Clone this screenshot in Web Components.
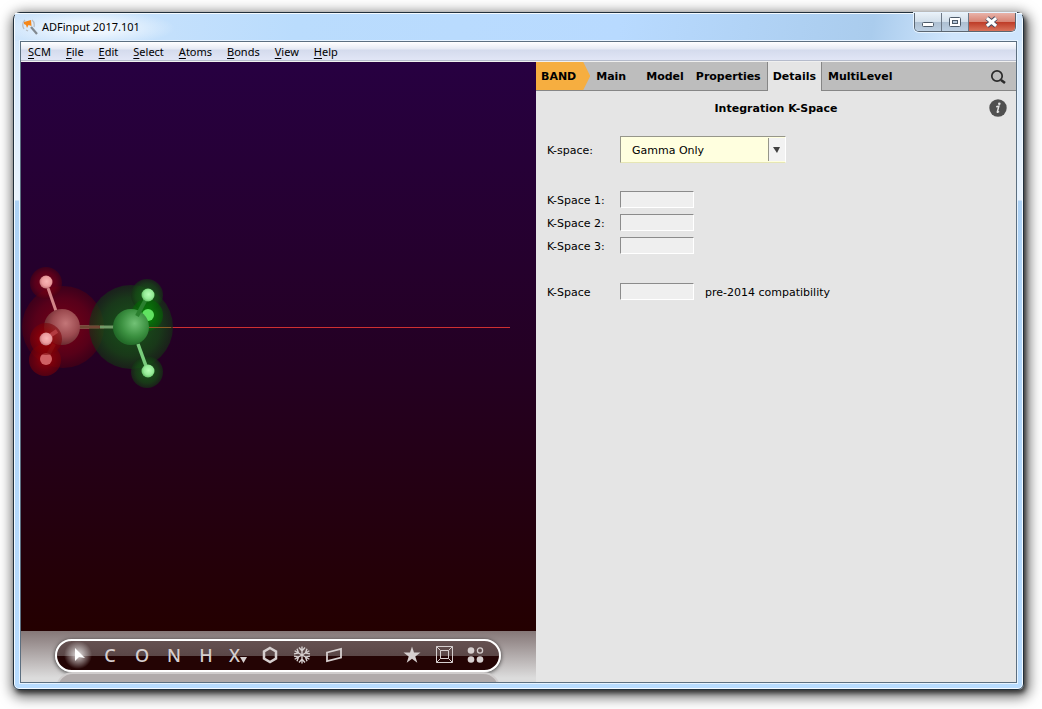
<!DOCTYPE html>
<html lang="en">
<head>
<meta charset="utf-8">
<meta name="viewport" content="width=device-width, initial-scale=1">
<title>ADFinput 2017.101</title>
<style>
  * { box-sizing: border-box; }
  body {
    margin: 0;
    min-height: 100vh;
    padding: 12px 18px 19px 13px;
    display: flex;
    background: #fff;
    color: #000;
    font: 11px "DejaVu Sans", Verdana, sans-serif;
  }
  app-window { flex: 1; min-width: 0; }
</style>
</head>
<body>
<app-window heading="ADFinput 2017.101">
  <menu-bar slot="menu" items="SCM,File,Edit,Select,Atoms,Bonds,View,Help"></menu-bar>
  <molecule-view></molecule-view>
  <settings-panel heading="Integration K-Space">
    <tab-strip slot="tabs" engine="BAND" items="Main,Model,Properties,Details,MultiLevel" active="Details"></tab-strip>
    <choice-row label="K-space:" value="Gamma Only"></choice-row>
    <field-row label="K-Space 1:"></field-row>
    <field-row label="K-Space 2:"></field-row>
    <field-row label="K-Space 3:"></field-row>
    <field-row class="legacy" label="K-Space" note="pre-2014 compatibility"></field-row>
  </settings-panel>
</app-window>

<script>
const base = `
  *, *::before, *::after { box-sizing: border-box; }
  button { font: inherit; color: inherit; background: none; border: 0; margin: 0; padding: 0; }
  svg { display: block; }
`;

class AppWindow extends HTMLElement {
  connectedCallback() {
    this.attachShadow({ mode: 'open' });
    this.shadowRoot.innerHTML = `
      <style>
        ${base}
        :host {
          display: flex;
          flex-direction: column;
          padding: 0 6px 6px;
          border: 1px solid #22303c;
          border-radius: 7px 7px 6px 6px;
          background:
            linear-gradient(#cfe5fb 0, #e9f3fd 187px, #aed2f5 188px, #b8dcff 100%);
          box-shadow: inset 0 0 0 1px #f4faff, 2px 3px 4px rgba(0, 0, 0, .55), 2px 4px 13px 3px rgba(0, 0, 0, .6);
        }

        header {
          display: flex;
          height: 28px;
          margin: 0 -5px;
          padding: 0 6px 0 7px;
          border-top: 1px solid #f4faff;
          background:
            radial-gradient(ellipse 85px 18px at 75px 14px, #eef6fe 30%, rgba(238, 246, 254, 0) 100%),
            linear-gradient(100deg, #cfe5fb 0, #badcfd 28%, #b8daff 60%, #aacced 85%, #cfe5fc 93%, #cfe5fc 100%);
        }

        .logo { margin: 4px 4px 0 0; flex: none; }

        h1 {
          flex: 1;
          margin: 0;
          font: 11px/26px "Noto Sans", "Open Sans", sans-serif;
        }

        .controls {
          display: flex;
          height: 19px;
          margin-top: -1px;
          border: 1px solid #5a6672;
          border-top: 0;
          border-radius: 0 0 5px 5px;
          overflow: hidden;
          box-shadow: 0 0 0 1px #e6f3ff;
        }

        .controls button {
          width: 27px;
          display: grid;
          place-items: center;
          border-right: 1px solid #6c7886;
          background: linear-gradient(#e9f1f8, #d2dfeb 48%, #adbfd1 50%, #bccfe2);
        }

        .controls button:last-child {
          width: 46px;
          border: 0;
          background: linear-gradient(#e8b3a9, #d88475 48%, #bd3a26 50%, #d9735b);
        }

        main {
          flex: 1;
          display: flex;
          flex-direction: column;
          border: 1px solid #5c6f80;
          box-shadow: 0 0 0 1px #e6f3ff;
        }

        .panes { flex: 1; display: flex; }
      </style>

      <header>
        <svg class="logo" width="16" height="18" viewBox="0 0 16 18" fill="none">
          <path d="M3 2Q-1 6 2 11M4 12l2 1M10 2q3 2 2 7" stroke="#b7bcc3" stroke-width="1.3"/>
          <path d="M2 4 9 2l.5 6-3-1L5 10 4 7 2 6z" fill="#f5871a"/>
          <path d="m9 9 6 7" stroke="#828990" stroke-width="2.2"/>
        </svg>
        <h1>${this.getAttribute('heading')}</h1>
        <div class="controls">
          <button aria-label="Minimize">
            <svg width="14" height="16"><rect x="1.5" y="8.5" width="11" height="4" rx="1" fill="#fff" stroke="#4d5a68"/></svg>
          </button>
          <button aria-label="Maximize">
            <svg width="14" height="16"><rect x="1.500" y="3.5" width="11" height="9" rx="1" fill="#fff" stroke="#4d5a68"/><rect x="4.5" y="6.5" width="5" height="3" fill="#b8c9da" stroke="#4d5a68"/></svg>
          </button>
          <button aria-label="Close">
            <svg width="14" height="16" fill="none"><path d="m2 4 9 8m0-8-9 8" stroke="#454d63" stroke-width="5"/><path d="m3 5 7 6m0-6-7 6" stroke="#fff" stroke-width="3" stroke-linecap="square"/></svg>
          </button>
        </div>
      </header>
      <main>
        <slot name="menu"></slot>
        <div class="panes"><slot></slot></div>
      </main>
    `;
  }
}

class MenuBar extends HTMLElement {
  connectedCallback() {
    const items = this.getAttribute('items').split(',');
    this.attachShadow({ mode: 'open' });
    this.shadowRoot.innerHTML = `
      <style>
        ${base}
        :host {
          display: block;
          height: 20px;
          border-bottom: 1px solid #f0f0f0;
          background: linear-gradient(#fff, #e6eaf4 7px, #d4dbed 8px, #e1e6f6 18px, #b6bccc 18px);
          font: 11px/19px "Noto Sans", "Open Sans", sans-serif;
        }
        nav { display: flex; }
        button { padding: 0 8px 0 7px; white-space: nowrap; }
        u { text-underline-offset: 2px; }
      </style>
      <nav>${items.map(t => `<button><u>${t[0]}</u>${t.slice(1)}</button>`).join('')}</nav>
    `;
  }
}

class MoleculeView extends HTMLElement {
  connectedCallback() {
    this.attachShadow({ mode: 'open' });
    this.shadowRoot.innerHTML = `
      <style>
        ${base}
        :host {
          flex: 515 1 0;
          min-width: 0;
          display: flex;
          flex-direction: column;
          background: linear-gradient(#270041, #240022 50%, #240000 92%);
        }
        .scene { flex: 1; display: flex; align-items: center; overflow: hidden; }
        .scene svg { flex: none; margin-bottom: 40px; }
      </style>
      <div class="scene">
        <svg width="515" height="150" viewBox="21 252 515 150" role="img" aria-label="Ethane fragments">
          <defs>
            <radialGradient id="rc" cx=".6" cy=".4" r=".6"><stop offset="0" stop-color="#c37678"/><stop offset=".6" stop-color="#9c4b50"/><stop offset="1" stop-color="#6b2b30"/></radialGradient>
            <radialGradient id="gc" cx=".6" cy=".4" r=".6"><stop offset="0" stop-color="#72c276"/><stop offset=".6" stop-color="#3c9141"/><stop offset="1" stop-color="#236c29"/></radialGradient>
            <radialGradient id="rh" cx=".55" cy=".45" r=".6"><stop offset="0" stop-color="#fab6b6"/><stop offset=".6" stop-color="#ec9c9f"/><stop offset="1" stop-color="#b8676b"/></radialGradient>
            <radialGradient id="gh" cx=".55" cy=".45" r=".6"><stop offset="0" stop-color="#b5ffb5"/><stop offset=".6" stop-color="#94ea96"/><stop offset="1" stop-color="#5cb85e"/></radialGradient>
            <radialGradient id="rs"><stop offset="0" stop-color="#990010" stop-opacity=".75"/><stop offset=".7" stop-color="#720012" stop-opacity=".65"/><stop offset="1" stop-color="#4c0012" stop-opacity=".6"/></radialGradient>
            <radialGradient id="gs"><stop offset="0" stop-color="#146c16" stop-opacity=".8"/><stop offset=".7" stop-color="#145014" stop-opacity=".7"/><stop offset="1" stop-color="#153015" stop-opacity=".65"/></radialGradient>
            <radialGradient id="rb"><stop offset="0" stop-color="#b80000" stop-opacity=".75"/><stop offset="1" stop-color="#780006" stop-opacity=".55"/></radialGradient>
            <radialGradient id="gb"><stop offset="0" stop-color="#00a800" stop-opacity=".75"/><stop offset="1" stop-color="#006800" stop-opacity=".5"/></radialGradient>
          </defs>
          <path d="M148 327.5H510" stroke="#ce3031"/>
          <circle cx="63" cy="327" r="41" fill="url(#rs)"/>
          <circle cx="46" cy="283" r="16" fill="url(#rs)"/>
          <path d="m48 288 8 23" stroke="#d28589" stroke-width="3"/>
          <circle cx="46" cy="282" r="6.5" fill="url(#rh)"/>
          <path d="M78 327h21" stroke="#8c5353" stroke-width="4"/>
          <circle cx="62" cy="327" r="18" fill="url(#rc)"/>
          <circle cx="131" cy="327" r="42" fill="url(#gs)"/>
          <path d="M80 327h24" stroke="#704633" stroke-width="3"/>
          <path d="M100 327h17" stroke="#709b67" stroke-width="3"/>
          <circle cx="147" cy="295" r="16" fill="url(#gs)"/>
          <circle cx="147" cy="315" r="16" fill="url(#gb)"/>
          <circle cx="148" cy="315" r="6" fill="#60e361"/>
          <circle cx="131" cy="327" r="18" fill="url(#gc)"/>
          <path d="m146 299-9 17" stroke="#2a7f2e" stroke-width="4"/>
          <circle cx="148" cy="295" r="6.5" fill="url(#gh)"/>
          <path d="M149 327.5h22" stroke="#8c5c25"/>
          <circle cx="147" cy="372" r="16" fill="url(#gs)"/>
          <path d="m138 344 8 22" stroke="#78cb7b" stroke-width="3.5"/>
          <circle cx="148" cy="371" r="6.5" fill="url(#gh)"/>
          <circle cx="45" cy="360" r="16" fill="url(#rb)"/>
          <path d="m54 344-7 13" stroke="#851b20" stroke-width="4"/>
          <circle cx="46" cy="359" r="6" fill="#cf6064"/>
          <circle cx="46" cy="339" r="16" fill="url(#rb)"/>
          <path d="m57 331-9 6" stroke="#b33b40" stroke-width="4"/>
          <circle cx="46" cy="339" r="6.5" fill="url(#rh)"/>
        </svg>
      </div>
      <tool-dock></tool-dock>
    `;
  }
}

class ToolDock extends HTMLElement {
  connectedCallback() {
    const color = '#d6cfcf';
    const icon = body => `<svg width="20" height="20" viewBox="0 0 20 20" fill="none" stroke="${color}">${body}</svg>`;
    const arm = [0, 60, 120, 180, 240, 300]
      .map(a => `<path transform="rotate(${a} 10 10)" d="M10 10V1.500M7 2.500l3 3.500 3-3.500"/>`).join('');

    this.attachShadow({ mode: 'open' });
    this.shadowRoot.innerHTML = `
      <style>
        ${base}
        :host {
          display: block;
          height: 51px;
          padding: 8px 35px 0 34px;
          overflow: hidden;
          background: linear-gradient(#857777, #dcdcdc 92%);
        }
        .bar {
          display: flex;
          align-items: center;
          height: 33px;
          padding: 0 7px 2px 5px;
          border: 2px solid #fff;
          border-radius: 17px;
          background: linear-gradient(#655151, #5b4747 50%, #240404 51%, #240404);
          box-shadow: 0 1px 4px rgba(0, 0, 0, .7);
          color: ${color};
          font: 500 18px "Noto Sans", "Open Sans", sans-serif;
        }
        .reflection {
          height: 33px;
          margin: 0 1px;
          border: 2px solid #d0cdcd;
          border-radius: 17px;
          background: #b1abab;
        }
        button {
          flex: 0 1 32px;
          min-width: 0;
          height: 28px;
          display: flex;
          align-items: center;
          justify-content: center;
        }
        .pointer { background: radial-gradient(circle 14px, rgba(255, 255, 255, .85), rgba(255, 255, 255, 0)); }
        .gap { flex: 1; }
      </style>
      <div class="bar">
        <button class="pointer" aria-label="Pointer">${icon('<path d="M7 3v13l4-4 6 1z" fill="#fff" stroke="none"/>')}</button>
        <button>C</button>
        <button>O</button>
        <button>N</button>
        <button>H</button>
        <button>X<svg width="7" height="20" aria-hidden="true"><path d="M0 12h7l-3.500 6z" fill="${color}"/></svg></button>
        <button aria-label="Ring">${icon('<path d="m10 3 6 3.500v7L10 17l-6-3.500v-7z" stroke-width="2.5"/>')}</button>
        <button aria-label="Crystal">${icon(`<g stroke-width="1.400">${arm}</g>`)}</button>
        <button aria-label="Slab">${icon('<path d="M3 7.500 17 4v8.500L3 16z" stroke-width="1.800"/>')}</button>
        <span class="gap"></span>
        <button aria-label="Favorites">${icon(`<path d="m10 1.500 2 6h6.500l-5.200 4 2 6.200-5.300-3.900-5.300 3.900 2-6.200-5.200-4H8z" fill="${color}" stroke="none"/>`)}</button>
        <button aria-label="Box">${icon('<path d="M2.5 1.5h16v16h-16zM6.5 5.5h8v8h-8zM2.5 1.5l4 4m12-4-4 4m4 12-4-4m-12 4 4-4"/>')}</button>
        <button aria-label="View style">${icon(`<g fill="${color}" stroke="none"><circle cx="5" cy="5.500" r="3.300"/><circle cx="5" cy="14.500" r="3.300"/><circle cx="14" cy="14.500" r="3.300"/></g><circle cx="14" cy="5.500" r="2.600" stroke-width="1.300"/>`)}</button>
      </div>
      <div class="reflection"></div>
    `;
  }
}

class SettingsPanel extends HTMLElement {
  connectedCallback() {
    this.attachShadow({ mode: 'open' });
    this.shadowRoot.innerHTML = `
      <style>
        ${base}
        :host { flex: 480 1 0; min-width: 0; background: #e5e5e5; }
        header {
          display: grid;
          grid-template-columns: 32px 1fr 32px;
          align-items: center;
          height: 34px;
        }
        h2 { grid-column: 2; margin: 0; text-align: center; font-size: 11px; }
        button { margin-left: 5px; }
        form { padding: 11px; }
        ::slotted(choice-row) { margin-bottom: 25px; }
        ::slotted(.legacy) { margin-top: 23px; }
      </style>
      <slot name="tabs"></slot>
      <header>
        <h2>${this.getAttribute('heading')}</h2>
        <button aria-label="Info">
          <svg width="18" height="18" viewBox="0 0 18 18" aria-hidden="true">
            <circle cx="9" cy="9" r="8.700" fill="#505050"/>
            <circle cx="10.300" cy="4.700" r="1.300" fill="#e5e5e5"/>
            <path d="M7.200 7.800 9.800 7.300 8.300 13q0 .8 1.800-.5" fill="none" stroke="#e5e5e5" stroke-width="1.500"/>
          </svg>
        </button>
      </header>
      <form><slot></slot></form>
    `;
  }
}

class TabStrip extends HTMLElement {
  connectedCallback() {
    const active = this.getAttribute('active');
    const tabs = this.getAttribute('items').split(',').map(t =>
      `<button role="tab" aria-selected="${t === active}">${t}</button>`).join('');

    this.attachShadow({ mode: 'open' });
    this.shadowRoot.innerHTML = `
      <style>
        ${base}
        :host { display: block; font-weight: bold; }
        div {
          display: flex;
          height: 29px;
          background: linear-gradient(#bdbdbd 28px, #868686 28px);
        }
        button { padding: 0 6px; }
        .engine {
          height: 28px;
          padding: 0 14px 0 5px;
          background: #f6ae40;
          clip-path: polygon(0 0, calc(100% - 7px) 0, 100% 50%, calc(100% - 7px) 100%, 0 100%);
        }
        [role=tab]:nth-child(2) { padding-right: 14px; }
        [aria-selected=true] {
          padding: 0 5px;
          border: 1px solid #868686;
          border-width: 0 1px;
          background: #e5e5e5;
        }
        .search { margin-left: auto; padding-right: 10px; }
      </style>
      <div role="tablist">
        <button class="engine">${this.getAttribute('engine')}</button>
        ${tabs}
        <button class="search" aria-label="Search">
          <svg width="16" height="16" fill="none" stroke="#2b2b2b"><circle cx="7" cy="7" r="5.200" stroke-width="1.700"/><path d="m11 11 4 3" stroke-width="2.600"/></svg>
        </button>
      </div>
    `;
  }
}

class FieldRow extends HTMLElement {
  connectedCallback() {
    const note = this.getAttribute('note');
    this.attachShadow({ mode: 'open' });
    this.shadowRoot.innerHTML = `
      <style>
        ${base}
        :host { display: flex; align-items: center; height: 23px; }
        label { width: 73px; white-space: nowrap; }
        label, span { padding-top: 2px; }
        input {
          width: 74px;
          height: 17px;
          margin: 0 11px 0 0;
          padding: 0 3px;
          font: inherit;
          background: #efefef;
          border: 1px solid;
          border-color: #8b8b8b #fff #fff #8b8b8b;
          border-radius: 0;
        }
      </style>
      <label for="field">${this.getAttribute('label')}</label>
      <input id="field" type="text">
      ${note ? `<span>${note}</span>` : ''}
    `;
  }
}

class ChoiceRow extends HTMLElement {
  connectedCallback() {
    this.attachShadow({ mode: 'open' });
    this.shadowRoot.innerHTML = `
      <style>
        ${base}
        :host { display: flex; align-items: center; }
        label { width: 73px; padding-top: 2px; white-space: nowrap; }
        .box { display: grid; width: 166px; }
        select, .arrow { grid-area: 1 / 1; }
        select {
          appearance: none;
          height: 27px;
          margin: 0;
          padding: 2px 28px 0 11px;
          font: inherit;
          color: inherit;
          background: #ffffdf;
          border: 1px solid;
          border-color: #96968a #fff #e6e6b4 #96968a;
          border-radius: 0;
        }
        .arrow {
          justify-self: end;
          align-self: center;
          width: 17px;
          height: 23px;
          margin-right: 1px;
          border-left: 1px solid #96968a;
          background: #f2f2f2;
          pointer-events: none;
        }
      </style>
      <label for="choice">${this.getAttribute('label')}</label>
      <div class="box">
        <select id="choice"><option>${this.getAttribute('value')}</option></select>
        <span class="arrow"><svg width="16" height="23" aria-hidden="true"><path d="M4 9h7l-3 6z" fill="#404040"/></svg></span>
      </div>
    `;
  }
}

customElements.define('app-window', AppWindow);
customElements.define('menu-bar', MenuBar);
customElements.define('molecule-view', MoleculeView);
customElements.define('tool-dock', ToolDock);
customElements.define('settings-panel', SettingsPanel);
customElements.define('tab-strip', TabStrip);
customElements.define('field-row', FieldRow);
customElements.define('choice-row', ChoiceRow);
</script>
</body>
</html>
